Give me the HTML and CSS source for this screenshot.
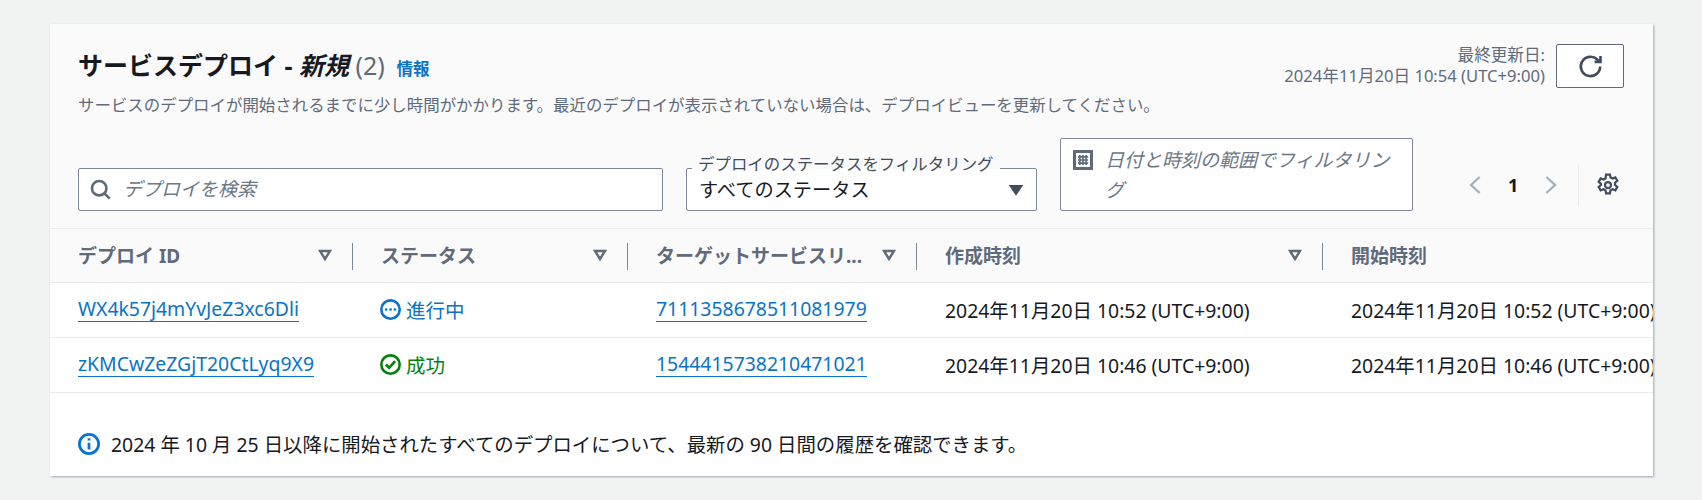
FILE: index.html
```html
<!DOCTYPE html>
<html lang="ja">
<head>
<meta charset="utf-8">
<title>サービスデプロイ</title>
<link rel="stylesheet" href="styles.css">
</head>
<body>
<section class="card">
  <header class="card-head">
    <div class="top-row">
      <div class="heading">
        <h2 class="title">サービスデプロイ - <em>新規</em> <span class="count">(2)</span> <a class="info" href="#">情報</a></h2>
        <p class="desc">サービスのデプロイが開始されるまでに少し時間がかかります。最近のデプロイが表示されていない場合は、デプロイビューを更新してください。</p>
      </div>
      <div class="updated">
        <div class="meta"><div class="meta-label">最終更新日:</div><div>2024年11月20日 10:54 (UTC+9:00)</div></div>
        <button class="refresh" type="button" aria-label="更新">
          <svg viewBox="0 0 16 16" class="icon-lg"><path d="M14.2 8a6.2 6.2 0 1 1-1.9-4.5L14 5"/><path d="M14.4 1.2V5h-3.8"/></svg>
        </button>
      </div>
    </div>
    <div class="filters">
      <div class="search box">
        <svg viewBox="0 0 16 16" class="icon"><circle cx="7" cy="7" r="5.5"/><path d="m11 11 4 4"/></svg>
        <span class="placeholder">デプロイを検索</span>
      </div>
      <div class="select box">
        <span class="float-label">デプロイのステータスをフィルタリング</span>
        <span class="select-value">すべてのステータス</span>
        <svg viewBox="0 0 16 16" class="caret"><path d="M1.5 3.5h13L8 13z"/></svg>
      </div>
      <div class="date box">
        <svg viewBox="0 0 16 16" class="icon cal"><rect x="1.2" y="1.2" width="13.6" height="13.6"/><path class="cal-grid" d="M4 5.5h8M4 8h8M4 10.5h8M5.5 4v8M8 4v8M10.5 4v8"/></svg>
        <span class="placeholder date-text">日付と時刻の範囲でフィルタリング</span>
      </div>
      <nav class="pager">
        <svg viewBox="0 0 12 16" class="chev"><path d="M9.5 2 3 8l6.5 6"/></svg>
        <span class="page-num">1</span>
        <svg viewBox="0 0 12 16" class="chev"><path d="M2.5 2 9 8l-6.5 6"/></svg>
        <span class="pager-sep"></span>
        <svg viewBox="0 0 16 16" class="icon gear"><path d="M6.7 1h2.6l.4 2 1.3.7 1.9-.8 1.3 2.3-1.5 1.3v1.5l1.5 1.3-1.3 2.3-1.9-.8-1.3.7-.4 2H6.7l-.4-2-1.3-.7-1.9.8-1.3-2.3 1.5-1.3V7.2L1.8 5.9l1.3-2.3 1.9.8 1.3-.7z"/><circle cx="8" cy="8" r="2"/></svg>
      </nav>
    </div>
  </header>

  <div class="table">
    <div class="row head-row">
      <div class="th">デプロイ ID<svg viewBox="0 0 14 12" class="sort"><path d="M2 2h10L7 10z"/></svg></div>
      <div class="th">ステータス<svg viewBox="0 0 14 12" class="sort"><path d="M2 2h10L7 10z"/></svg></div>
      <div class="th"><span class="truncate">ターゲットサービスリ...</span><svg viewBox="0 0 14 12" class="sort"><path d="M2 2h10L7 10z"/></svg></div>
      <div class="th">作成時刻<svg viewBox="0 0 14 12" class="sort"><path d="M2 2h10L7 10z"/></svg></div>
      <div class="th last">開始時刻</div>
    </div>
    <div class="row body-row">
      <div class="td"><a href="#">WX4k57j4mYvJeZ3xc6Dli</a></div>
      <div class="td status progress"><svg viewBox="0 0 16 16" class="icon"><circle cx="8" cy="8" r="7"/><path class="dots" d="M4.6 8h.1M8 8h.1M11.3 8h.1"/></svg>進行中</div>
      <div class="td"><a href="#">7111358678511081979</a></div>
      <div class="td">2024年11月20日 10:52 (UTC+9:00)</div>
      <div class="td">2024年11月20日 10:52 (UTC+9:00)</div>
    </div>
    <div class="row body-row">
      <div class="td"><a href="#">zKMCwZeZGjT20CtLyq9X9</a></div>
      <div class="td status success"><svg viewBox="0 0 16 16" class="icon"><circle cx="8" cy="8" r="7"/><path d="m4.5 8 2.5 2.5 4.5-5"/></svg>成功</div>
      <div class="td"><a href="#">1544415738210471021</a></div>
      <div class="td">2024年11月20日 10:46 (UTC+9:00)</div>
      <div class="td">2024年11月20日 10:46 (UTC+9:00)</div>
    </div>
  </div>

  <footer class="note">
    <svg viewBox="0 0 16 16" class="icon"><circle cx="8" cy="8" r="7"/><path d="M8 7v5M8 3.8v1.6"/></svg>
    <span>2024 年 10 月 25 日以降に開始されたすべてのデプロイについて、最新の 90 日間の履歴を確認できます。</span>
  </footer>
</section>
</body>
</html>
```
FILE: styles.css
```css
* { box-sizing: border-box; }
html, body { margin: 0; height: 500px; overflow: hidden; }
body {
  background: #f1f3f3;
  font-family: "Noto Sans", "Noto Sans CJK JP", sans-serif;
  color: #16191f;
  font-size: 19px;
  padding: 24px 49px 23px 50px;
}
.card {
  height: 452px;
  background: #fff;
  box-shadow: 1px 1px 2px rgba(60, 80, 95, .45);
  overflow: hidden;
}
.card-head {
  background: #fafafa;
  padding: 20px 29px 17px 28px;
}
.top-row { display: flex; justify-content: space-between; height: 71px; }
.heading { padding-top: 6px; }
.title { margin: 0; font-size: 25px; line-height: 30px; font-weight: 700; }
.title em { font-style: italic; }
.count { font-weight: 400; color: #5f6b7a; }
.info { font-size: 16.5px; color: #0b74c4; text-decoration: none; margin-left: 5px; }
.desc { margin: 11px 0 0; font-size: 16.45px; line-height: 20px; color: #5f6b7a; white-space: nowrap; }
.updated { display: flex; gap: 11px; align-items: flex-start; }
.meta { text-align: right; font-size: 16.6px; line-height: 21px; color: #5f6b7a; white-space: nowrap; }
.refresh {
  width: 68px; height: 44px; padding: 0;
  display: flex; align-items: center; justify-content: center;
  background: #fff; border: 1px solid #5f6b7a; border-radius: 2px;
}
.icon-lg { width: 25px; height: 25px; fill: none; stroke: #414d5c; stroke-width: 1.7; }
.icon { width: 21px; height: 21px; fill: none; stroke: #5f6b7a; stroke-width: 2; flex: none; }
.filters { display: flex; align-items: flex-end; margin-top: 23px; gap: 23px; }
.box {
  display: flex; align-items: center;
  height: 43px;
  background: #fff;
  border: 1px solid #7d8998;
  border-radius: 2px;
}
.search { width: 585px; padding-left: 11px; gap: 12px; }
.placeholder { font-style: italic; color: #6b7785; font-size: 19px; line-height: 26px; padding-bottom: 2px; }
.select { width: 351px; padding: 0 11px 0 12px; position: relative; justify-content: space-between; }
.float-label {
  position: absolute; left: 5px; top: -16px;
  padding: 0 6px;
  background: linear-gradient(#fafafa 75%, #fff 75%);
  font-size: 16.45px; line-height: 21px; color: #414d5c;
  white-space: nowrap;
}
.select-value { font-size: 19.2px; line-height: 26px; color: #16191f; }
.caret { width: 18px; height: 18px; fill: #414d5c; }
.date {
  width: 353px; height: 73px;
  padding: 6px 12px 6px 12px; align-items: flex-start; gap: 12px;
}
.date-text { line-height: 30px; padding: 0; }
.cal { width: 20px; height: 20px; margin-top: 5px; stroke: #5f6b7a; stroke-width: 2.4; fill: #fff; }
.cal-grid { stroke-width: 1.3; stroke: #5f6b7a; }
.pager { display: flex; align-items: center; margin-bottom: 5px; margin-left: 31px; height: 43px; }
.chev { width: 16px; height: 24px; fill: none; stroke: #a4b0b5; stroke-width: 1.7; }
.page-num { font-weight: 700; font-size: 18px; margin: 0 25px; }
.pager-sep { width: 1px; height: 42px; background: #e9ebed; margin: 0 17px 0 19px; }
.gear { width: 24px; height: 24px; stroke: #414d5c; stroke-width: 1.5; }
.table { border-top: 1px solid #e9ebed; }
.row {
  display: grid;
  grid-template-columns: 303px 275px 289px 406px 406px;
  border-bottom: 1px solid #e9ebed;
}
.head-row { height: 54px; background: #fafafa; }
.body-row { height: 55px; background: #fff; }
.th {
  display: flex; align-items: center; justify-content: space-between;
  padding: 0 21px 2px 28px;
  position: relative;
  font-size: 19px; font-weight: 700; color: #5f6b7a;
  white-space: nowrap;
}
.th::after {
  content: ""; position: absolute; right: 0; top: 14px;
  width: 1px; height: 27px; background: #7d8998;
}
.th.last::after { display: none; }
.sort { width: 14px; height: 12px; fill: none; stroke: #5f6b7a; stroke-width: 2.4; flex: none; }
.td {
  display: flex; align-items: center;
  padding: 0 0 2px 28px;
  font-size: 19.4px;
  white-space: nowrap;
}
.td a { color: #0b74c4; text-decoration: none; border-bottom: 1px solid #0972d3; line-height: 24px; }
.status { gap: 5px; font-size: 19.5px; padding-left: 27px; }
.progress { color: #0b74c4; }
.progress .icon { stroke: #0972d3; }
.dots { stroke-width: 2; stroke-linecap: round; }
.success { color: #037f0c; }
.success .icon { stroke: #037f0c; }
.note { display: flex; align-items: center; gap: 11px; padding: 36px 0 0 28px; font-size: 19.4px; white-space: nowrap; }
.note .icon { width: 22px; height: 22px; stroke: #0972d3; }
```
